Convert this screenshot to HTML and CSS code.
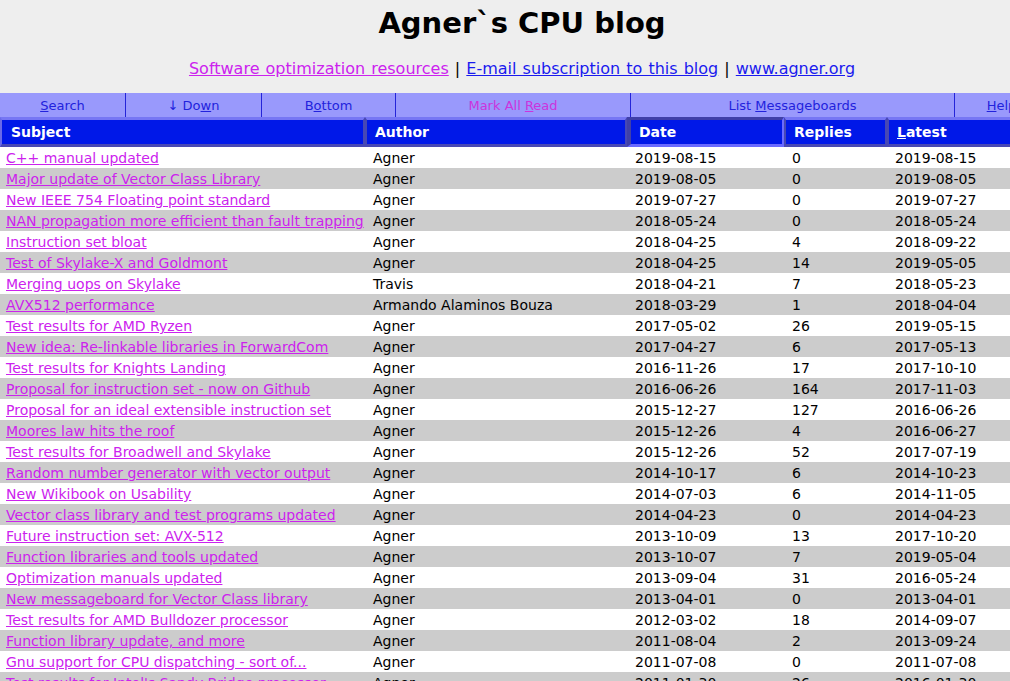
FILE: index.html
```html
<!DOCTYPE html>
<html>
<head>
<meta charset="utf-8">
<title>Agner`s CPU blog</title>
<link rel="stylesheet" href="styles.css">
</head>
<body>
<div class="page">
  <div class="top">
    <h1 class="title">Agner`s CPU blog</h1>
    <p class="links"><a class="visited" href="#">Software optimization resources</a> | <a class="fresh" href="#">E-mail subscription to this blog</a> | <a class="fresh" href="#">www.agner.org</a></p>
  </div>
  <div class="nav">
    <a class="nav-item w1" href="#"><u>S</u>earch</a>
    <a class="nav-item w2" href="#">↓ Do<u>w</u>n</a>
    <a class="nav-item w3" href="#">B<u>o</u>ttom</a>
    <a class="nav-item w4 mark" href="#">Mark All <u>R</u>ead</a>
    <a class="nav-item w5" href="#">List <u>M</u>essageboards</a>
    <a class="nav-item w6" href="#"><u>H</u>elp</a>
  </div>
  <table class="list">
    <colgroup>
      <col class="c-subject"><col class="c-author"><col class="c-date"><col class="c-replies"><col class="c-latest">
    </colgroup>
    <thead>
      <tr>
        <th class="h-subject">Subject</th>
        <th>Author</th>
        <th class="sorted">Date</th>
        <th>Replies</th>
        <th><u>L</u>atest</th>
      </tr>
    </thead>
    <tbody>
      <tr><td><a href="#">C++ manual updated</a></td><td>Agner</td><td>2019-08-15</td><td>0</td><td>2019-08-15</td></tr>
      <tr><td><a href="#">Major update of Vector Class Library</a></td><td>Agner</td><td>2019-08-05</td><td>0</td><td>2019-08-05</td></tr>
      <tr><td><a href="#">New IEEE 754 Floating point standard</a></td><td>Agner</td><td>2019-07-27</td><td>0</td><td>2019-07-27</td></tr>
      <tr><td><a href="#">NAN propagation more efficient than fault trapping</a></td><td>Agner</td><td>2018-05-24</td><td>0</td><td>2018-05-24</td></tr>
      <tr><td><a href="#">Instruction set bloat</a></td><td>Agner</td><td>2018-04-25</td><td>4</td><td>2018-09-22</td></tr>
      <tr><td><a href="#">Test of Skylake-X and Goldmont</a></td><td>Agner</td><td>2018-04-25</td><td>14</td><td>2019-05-05</td></tr>
      <tr><td><a href="#">Merging uops on Skylake</a></td><td>Travis</td><td>2018-04-21</td><td>7</td><td>2018-05-23</td></tr>
      <tr><td><a href="#">AVX512 performance</a></td><td>Armando Alaminos Bouza</td><td>2018-03-29</td><td>1</td><td>2018-04-04</td></tr>
      <tr><td><a href="#">Test results for AMD Ryzen</a></td><td>Agner</td><td>2017-05-02</td><td>26</td><td>2019-05-15</td></tr>
      <tr><td><a href="#">New idea: Re-linkable libraries in ForwardCom</a></td><td>Agner</td><td>2017-04-27</td><td>6</td><td>2017-05-13</td></tr>
      <tr><td><a href="#">Test results for Knights Landing</a></td><td>Agner</td><td>2016-11-26</td><td>17</td><td>2017-10-10</td></tr>
      <tr><td><a href="#">Proposal for instruction set - now on Github</a></td><td>Agner</td><td>2016-06-26</td><td>164</td><td>2017-11-03</td></tr>
      <tr><td><a href="#">Proposal for an ideal extensible instruction set</a></td><td>Agner</td><td>2015-12-27</td><td>127</td><td>2016-06-26</td></tr>
      <tr><td><a href="#">Moores law hits the roof</a></td><td>Agner</td><td>2015-12-26</td><td>4</td><td>2016-06-27</td></tr>
      <tr><td><a href="#">Test results for Broadwell and Skylake</a></td><td>Agner</td><td>2015-12-26</td><td>52</td><td>2017-07-19</td></tr>
      <tr><td><a href="#">Random number generator with vector output</a></td><td>Agner</td><td>2014-10-17</td><td>6</td><td>2014-10-23</td></tr>
      <tr><td><a href="#">New Wikibook on Usability</a></td><td>Agner</td><td>2014-07-03</td><td>6</td><td>2014-11-05</td></tr>
      <tr><td><a href="#">Vector class library and test programs updated</a></td><td>Agner</td><td>2014-04-23</td><td>0</td><td>2014-04-23</td></tr>
      <tr><td><a href="#">Future instruction set: AVX-512</a></td><td>Agner</td><td>2013-10-09</td><td>13</td><td>2017-10-20</td></tr>
      <tr><td><a href="#">Function libraries and tools updated</a></td><td>Agner</td><td>2013-10-07</td><td>7</td><td>2019-05-04</td></tr>
      <tr><td><a href="#">Optimization manuals updated</a></td><td>Agner</td><td>2013-09-04</td><td>31</td><td>2016-05-24</td></tr>
      <tr><td><a href="#">New messageboard for Vector Class library</a></td><td>Agner</td><td>2013-04-01</td><td>0</td><td>2013-04-01</td></tr>
      <tr><td><a href="#">Test results for AMD Bulldozer processor</a></td><td>Agner</td><td>2012-03-02</td><td>18</td><td>2014-09-07</td></tr>
      <tr><td><a href="#">Function library update, and more</a></td><td>Agner</td><td>2011-08-04</td><td>2</td><td>2013-09-24</td></tr>
      <tr><td><a href="#">Gnu support for CPU dispatching - sort of...</a></td><td>Agner</td><td>2011-07-08</td><td>0</td><td>2011-07-08</td></tr>
      <tr><td><a href="#">Test results for Intel's Sandy Bridge processor</a></td><td>Agner</td><td>2011-01-30</td><td>26</td><td>2016-01-30</td></tr>
      <tr><td><a href="#">Test results for Intel's Atom processor</a></td><td>Agner</td><td>2010-12-22</td><td>5</td><td>2011-02-14</td></tr>
    </tbody>
  </table>
</div>
</body>
</html>
```

FILE: styles.css
```css
html, body {
  margin: 0;
  padding: 0;
  background: #ffffff;
}

body {
  font-family: "DejaVu Sans", Verdana, sans-serif;
  color: #000000;
}

.page {
  width: 1044px;
}

.top {
  background: #eeeeee;
  padding: 3px 0 14px;
  text-align: center;
}

.title {
  margin: 0;
  font-size: 29px;
  line-height: 40px;
  font-weight: bold;
}

.links {
  margin: 16px 0 0;
  font-size: 16px;
  line-height: 20px;
  word-spacing: 1px;
}

.links a.visited {
  color: #cc22ee;
}

.links a.fresh {
  color: #1a1aee;
}

.nav {
  display: flex;
  height: 24px;
  background: #9999fc;
}

.nav-item {
  display: block;
  flex: none;
  height: 24px;
  padding-top: 2px;
  line-height: 22px;
  text-align: center;
  white-space: nowrap;
  font-size: 13px;
  color: #2222dd;
  text-decoration: none;
  border-right: 1px solid #2424d8;
  box-sizing: border-box;
}

.nav-item.mark {
  color: #cc33dd;
}

.nav-item.w1 { width: 126px; }
.nav-item.w2 { width: 136px; }
.nav-item.w3 { width: 134px; }
.nav-item.w4 { width: 235px; }
.nav-item.w5 { width: 324px; }
.nav-item.w6 { width: 93px; border-right: none; }

.list {
  border-collapse: separate;
  border-spacing: 0;
  table-layout: fixed;
  width: 1048px;
}

.c-subject { width: 365px; }
.c-author { width: 262px; }
.c-date { width: 157px; }
.c-replies { width: 103px; }
.c-latest { width: 161px; }

.list th {
  height: 30px;
  box-sizing: border-box;
  padding: 0 0 0 8px;
  background: #0018e8;
  color: #ffffff;
  font-size: 14px;
  font-weight: bold;
  text-align: left;
  border: 3px solid #4848b4;
  border-top-color: #7676f4;
  border-left-width: 2px;
  border-right-width: 2px;
}

.list th.h-subject {
  padding-left: 9px;
  border-left-color: #6a6ae8;
}

.list th.sorted {
  border-top-color: #4040a8;
  border-left-color: #4040a8;
  border-left-width: 4px;
  border-bottom-color: #6a6aff;
  border-right-color: #6a6aff;
}

.list td {
  height: 21px;
  padding: 1px 0 0 8px;
  box-sizing: border-box;
  font-size: 14px;
  line-height: 20px;
  white-space: nowrap;
  overflow: hidden;
}

.list td:first-child {
  padding-left: 6px;
}

.list tbody tr:nth-child(even) td {
  background: #cccccc;
}

.list td a {
  color: #cc22ee;
}
```
